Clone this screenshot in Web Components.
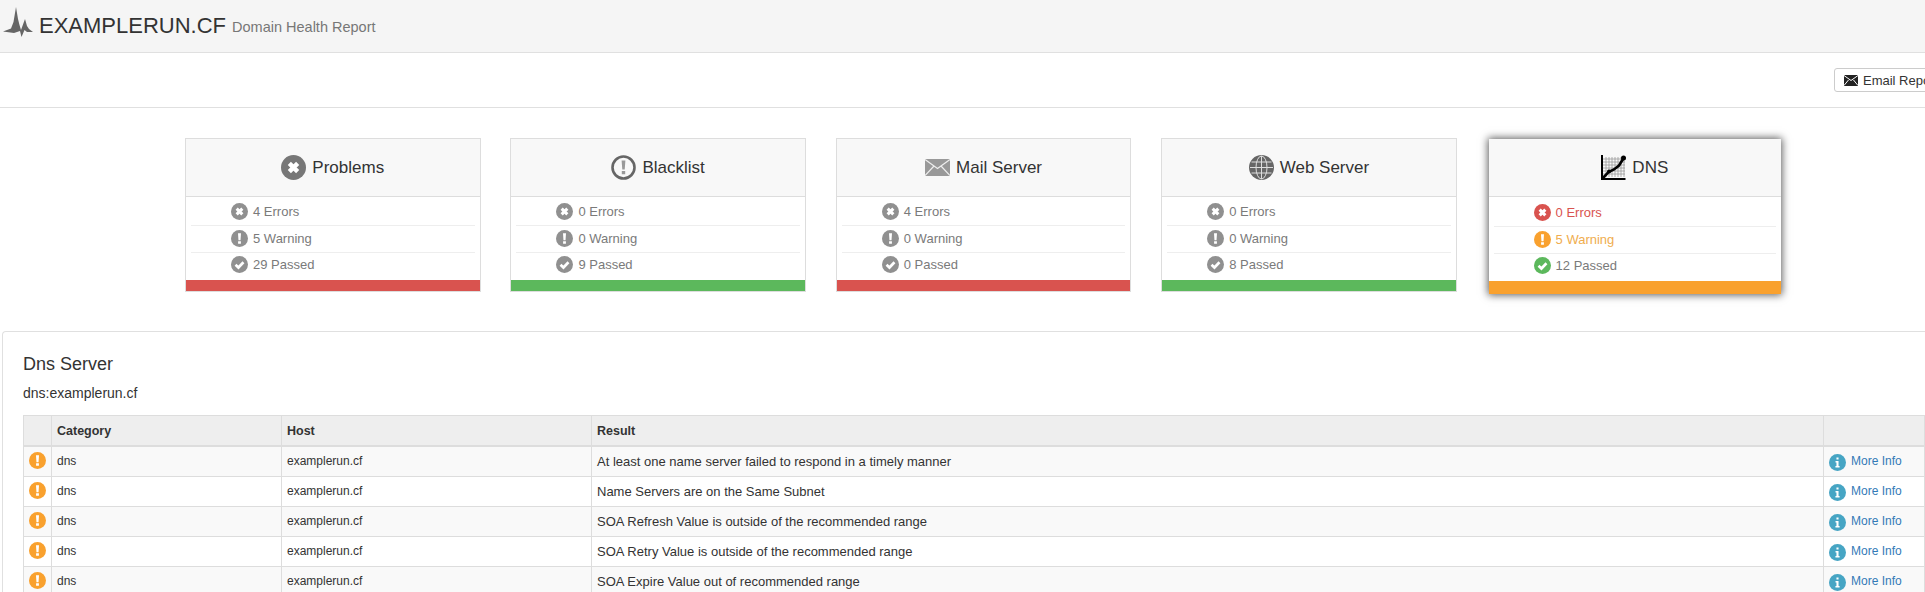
<!DOCTYPE html>
<html>
<head>
<meta charset="utf-8">
<title>Domain Health Report</title>
<style>
html, body { margin: 0; padding: 0; overflow: hidden; background: #fff; }
body { font-family: "Liberation Sans", Arial, sans-serif; font-size: 14px; color: #333; height: 592px; }
</style>
</head>
<body>
<site-header name="EXAMPLERUN.CF" subtitle="Domain Health Report"></site-header>
<tool-bar></tool-bar>
<card-row>
    <health-card title="Problems" icon="error-big" errors="4" warnings="5" passed="29" bar="#d9534f"></health-card>
    <health-card title="Blacklist" icon="ring" errors="0" warnings="0" passed="9" bar="#5cb85c"></health-card>
    <health-card title="Mail Server" icon="mail" errors="4" warnings="0" passed="0" bar="#d9534f"></health-card>
    <health-card title="Web Server" icon="globe" errors="0" warnings="0" passed="8" bar="#5cb85c"></health-card>
    <health-card title="DNS" icon="chart" errors="0" warnings="5" passed="12" bar="#f9a12e" active></health-card>
</card-row>
<report-panel heading="Dns Server" sub="dns:examplerun.cf">
    <report-row host="examplerun.cf" result="At least one name server failed to respond in a timely manner"></report-row>
    <report-row host="examplerun.cf" result="Name Servers are on the Same Subnet"></report-row>
    <report-row host="examplerun.cf" result="SOA Refresh Value is outside of the recommended range"></report-row>
    <report-row host="examplerun.cf" result="SOA Retry Value is outside of the recommended range"></report-row>
    <report-row host="examplerun.cf" result="SOA Expire Value out of recommended range"></report-row>
</report-panel>

<script>
// round badge icons, shared by the cards and the table
function badge(kind, color, size) {
    const marks = {
        error: '<path d="M6 6l6 6M12 6l-6 6" stroke="#fff" stroke-width="3.2" fill="none"/>',
        warn: '<path d="M7.4 3.400h3.200l-.5 7.400H7.900zM7.500 11.800h3v2.800h-3z" fill="#fff"/>',
        ok: '<path d="M4.800 9.200l3.100 3 5.300-5.600" stroke="#fff" stroke-width="2.800" fill="none"/>',
        info: '<path d="M7.900 3.600h2.200v2.100H7.900zM6.900 7.400h3.200v5.200h1.100v1.600H6.800v-1.600h1.100V9H6.900z" fill="#fff"/>'
    };
    return `<svg width="${size}" height="${size}" viewBox="0 0 18 18"><circle cx="9" cy="9" r="9" fill="${color}"/>${marks[kind]}</svg>`;
}

const titleIcons = {
    'error-big': badge('error', '#777', 25),
    ring: `<svg width="25" height="25" viewBox="0 0 25 25"><circle cx="12.5" cy="12.5" r="11" fill="none" stroke="#666" stroke-width="2.6"/><path d="M10.600 5.500h3.800l-.7 9h-2.400zM10.800 16h3.400v3.300h-3.400z" fill="#999"/></svg>`,
    mail: `<svg width="25" height="17" viewBox="0 0 25 17"><rect width="25" height="17" fill="#999"/><path d="M0 .5l12.500 9 12.500-9M0 16.500l9-9.500M25 16.500l-9-9.500" fill="none" stroke="#eee" stroke-width="1.200"/></svg>`,
    globe: `<svg width="25" height="25" viewBox="0 0 25 25"><circle cx="12.500" cy="12.500" r="12.500" fill="#666"/><g fill="none" stroke="#ddd" stroke-width="1"><ellipse cx="12.500" cy="12.500" rx="5.500" ry="11.500"/><path d="M12.500 1v23M1 12.500h23M2.500 7h20M2.500 18h20"/></g></svg>`,
    chart: `<svg width="25" height="25" viewBox="0 0 25 25"><g stroke="#999" stroke-width=".8"><path d="M5 2v20M8 2v20M11 2v20M14 2v20M17 2v20M20 2v20M23 2v20M2 4h22M2 7h22M2 10h22M2 13h22M2 16h22M2 19h22"/></g><path d="M1 0v24h23.500" fill="none" stroke="#000" stroke-width="2"/><path d="M2 23l5.500-6 5.500-2.500 5-4 5-8" fill="none" stroke="#000" stroke-width="2.600"/><circle cx="8" cy="16.500" r="2" fill="#000"/><circle cx="22.500" cy="3" r="2.500" fill="#000"/></svg>`
};

class SiteHeader extends HTMLElement {
    constructor() {
        super();
        this.attachShadow({ mode: 'open' });
        this.shadowRoot.innerHTML = `
            <style>
                :host { display: flex; align-items: center; height: 52px; background: #f5f5f5; border-bottom: 1px solid #e0e0e0; }
                .name { font-size: 22px; color: #333; margin-left: 5px; line-height: 52px; }
                .sub { font-size: 14.5px; color: #777; margin-left: 6px; padding-top: 2px; }
            </style>
            <svg width="34" height="52" viewBox="0 0 34 52"><path d="M3 31.500L11 28.500 13.500 22 16 7 18 19 19.500 25 21 30 25 19 27 26 29 29 33 32 27 32 24.500 30 21.500 37 20 31 17 32 14 33z" fill="#666"/></svg>
            <span class="name"></span><span class="sub"></span>
        `;
    }

    connectedCallback() {
        this.shadowRoot.querySelector('.name').textContent = this.getAttribute('name');
        this.shadowRoot.querySelector('.sub').textContent = this.getAttribute('subtitle');
    }
}

class ToolBar extends HTMLElement {
    constructor() {
        super();
        this.attachShadow({ mode: 'open' });
        this.shadowRoot.innerHTML = `
            <style>
                :host { display: flex; justify-content: flex-end; align-items: center; height: 54px; border-bottom: 1px solid #e0e0e0; }
                button { flex: none; width: 115px; height: 24px; margin-right: -24px; padding: 0 0 0 9px; border: 1px solid #ccc; border-radius: 3px; background: #fff; color: #333; font: 13px "Liberation Sans", Arial, sans-serif; display: flex; align-items: center; gap: 5px; white-space: nowrap; }
            </style>
            <button>
                <svg width="14" height="11" viewBox="0 0 14 11"><rect width="14" height="11" fill="#222"/><path d="M0 .5l7 5 7-5M0 10.500l4.500-5.500M14 10.500l-4.500-5.500" fill="none" stroke="#fff" stroke-width="1"/></svg>
                Email Report
            </button>
        `;
    }
}

class CardRow extends HTMLElement {
    constructor() {
        super();
        this.attachShadow({ mode: 'open' });
        this.shadowRoot.innerHTML = `
            <style>
                :host { display: grid; grid-template-columns: repeat(5, 295.5px); column-gap: 29.9px; padding: 30px 0 0 185px; height: 193px; align-items: start; }
            </style>
            <slot></slot>
        `;
    }
}

class HealthCard extends HTMLElement {
    constructor() {
        super();
        this.attachShadow({ mode: 'open' });
        this.shadowRoot.innerHTML = `
            <style>
                :host { display: block; box-sizing: border-box; border: 1px solid #ddd; background: #fff; color: #7a7a7a; }
                :host([active]) { border: 0; margin: 1px 1px 0 2px; box-shadow: 0 0 8px 1px rgba(0,0,0,.65); }
                .head { display: flex; align-items: center; justify-content: center; gap: 6px; height: 57px; background: #f8f8f8; border-bottom: 1px solid #ddd; font-size: 17px; color: #333; }
                .icon { display: flex; }
                ul { list-style: none; margin: 0; padding: 0 5px; }
                li { display: flex; align-items: center; gap: 5px; padding-left: 40px; border-bottom: 1px solid #eee; font-size: 13px; box-sizing: border-box; }
                .err { height: 29px; }
                .warn { height: 27px; padding-bottom: 1px; }
                .ok { height: 27px; padding-bottom: 4px; border-bottom: 0; }
                :host([active]) .err { color: #d9534f; height: 30px; padding-top: 1px; }
                :host([active]) .warn { color: #f0ad4e; }
                .bar { height: 11px; }
                :host([active]) .bar { height: 13px; }
            </style>
            <div class="head"><span class="icon"></span><span class="title"></span></div>
            <ul>
                <li class="err"></li>
                <li class="warn"></li>
                <li class="ok"></li>
            </ul>
            <div class="bar"></div>
        `;
    }

    connectedCallback() {
        const root = this.shadowRoot;
        const active = this.hasAttribute('active');
        const row = (sel, kind, color, text) => {
            root.querySelector(sel).innerHTML = badge(kind, active ? color : '#909090', 17) + `<span>${text}</span>`;
        };
        root.querySelector('.icon').innerHTML = titleIcons[this.getAttribute('icon')];
        root.querySelector('.title').textContent = this.getAttribute('title');
        row('.err', 'error', '#d9534f', this.getAttribute('errors') + ' Errors');
        row('.warn', 'warn', '#f9a12e', this.getAttribute('warnings') + ' Warning');
        row('.ok', 'ok', '#5cb85c', this.getAttribute('passed') + ' Passed');
        root.querySelector('.bar').style.background = this.getAttribute('bar');
    }
}

class ReportPanel extends HTMLElement {
    constructor() {
        super();
        this.attachShadow({ mode: 'open' });
        this.shadowRoot.innerHTML = `
            <style>
                :host { display: block; margin: 0 0 0 2px; padding: 20px 0 0 20px; border: 1px solid #e0e0e0; border-right: 0; border-bottom: 0; border-radius: 4px 0 0 0; height: 241px; }
                h3 { margin: 0; font-size: 18px; font-weight: 400; line-height: 24px; color: #333; }
                p { margin: 5px 0 0; font-size: 14px; line-height: 24px; color: #333; }
                .table { margin-top: 10px; border: 1px solid #ddd; border-bottom: 0; font-size: 12px; color: #333; width: 1900px; }
                .head { display: grid; grid-template-columns: 27px 230px 310px 1232px 100px; height: 29px; background: #eee; border-bottom: 2px solid #ddd; font-weight: 700; font-size: 12.5px; line-height: 31px; }
                .head span { padding-left: 5px; border-left: 1px solid #ddd; }
                .head span:first-child { border-left: 0; padding: 0; }
            </style>
            <h3></h3>
            <p></p>
            <div class="table">
                <div class="head"><span></span><span>Category</span><span>Host</span><span>Result</span><span></span></div>
                <slot></slot>
            </div>
        `;
    }

    connectedCallback() {
        this.shadowRoot.querySelector('h3').textContent = this.getAttribute('heading');
        this.shadowRoot.querySelector('p').textContent = this.getAttribute('sub');
    }
}

class ReportRow extends HTMLElement {
    constructor() {
        super();
        this.attachShadow({ mode: 'open' });
        this.shadowRoot.innerHTML = `
            <style>
                :host { display: grid; grid-template-columns: 27px 230px 310px 1232px 100px; height: 29px; border-bottom: 1px solid #ddd; font-size: 12px; line-height: 29px; background: #fff; }
                :host(:nth-child(odd)) { background: #f9f9f9; }
                div { padding-left: 5px; border-left: 1px solid #ddd; white-space: nowrap; }
                .flag { padding: 5px 0 0 5px; border-left: 0; line-height: 0; }
                .result { font-size: 13px; }
                .more { display: flex; align-items: center; gap: 5px; color: #337ab7; padding-left: 5px; }
                .more svg { margin-top: 2px; }
            </style>
            <div class="flag"></div>
            <div>dns</div>
            <div class="host"></div>
            <div class="result"></div>
            <div class="more"></div>
        `;
    }

    connectedCallback() {
        const root = this.shadowRoot;
        root.querySelector('.flag').innerHTML = badge('warn', '#f9a12e', 17);
        root.querySelector('.host').textContent = this.getAttribute('host');
        root.querySelector('.result').textContent = this.getAttribute('result');
        root.querySelector('.more').innerHTML = badge('info', '#46a5c4', 17) + '<span>More Info</span>';
    }
}

customElements.define('site-header', SiteHeader);
customElements.define('tool-bar', ToolBar);
customElements.define('card-row', CardRow);
customElements.define('health-card', HealthCard);
customElements.define('report-panel', ReportPanel);
customElements.define('report-row', ReportRow);
</script>
</body>
</html>
